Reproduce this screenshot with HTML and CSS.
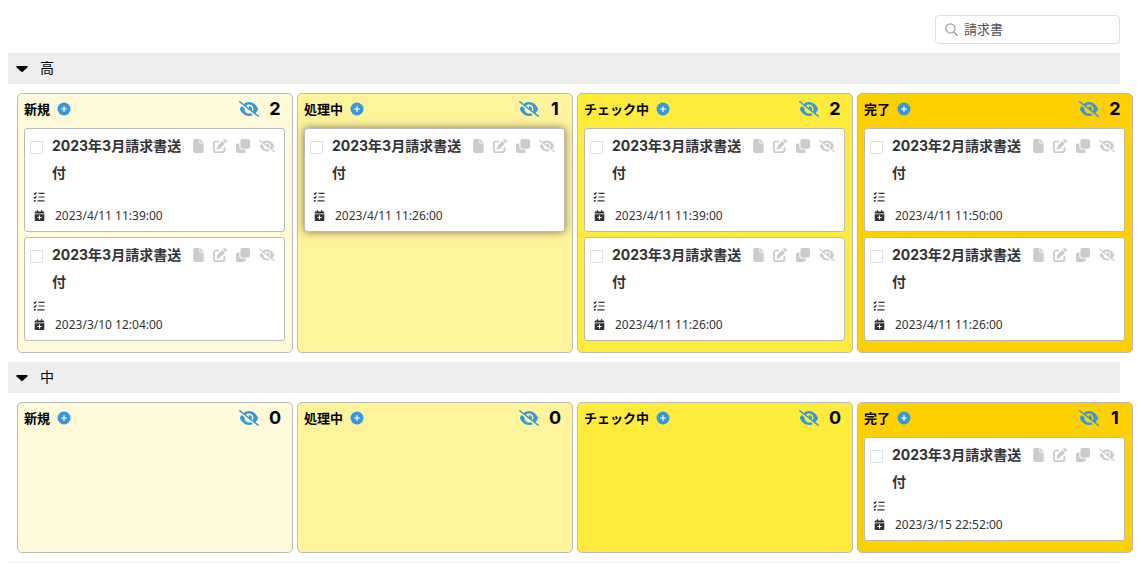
FILE: index.html
```html
<!DOCTYPE html>
<html lang="ja">
<head>
    <meta charset="UTF-8">
    <meta name="viewport" content="width=device-width, initial-scale=1.0">
    <title>カンバン</title>
    <link rel="stylesheet" href="styles.css">
</head>
<body>

<!-- Icons -->
<svg class="sprite" aria-hidden="true">
    <symbol id="i-search" viewBox="0 0 24 24">
        <circle cx="10" cy="10" r="8.5" fill="none" stroke="currentColor" stroke-width="2.2"/>
        <path d="M16.5 16.5l6 6" fill="none" stroke="currentColor" stroke-width="2.4" stroke-linecap="round"/>
    </symbol>
    <symbol id="i-caret" viewBox="0 0 12 8">
        <path d="M1.2 1h9.6c.9 0 1.2.8.6 1.4L7 6.6c-.6.5-1.4.5-2 0L.6 2.4C0 1.8.3 1 1.2 1z"/>
    </symbol>
    <symbol id="i-plus" viewBox="0 0 14 14">
        <circle cx="7" cy="7" r="6.5"/>
        <path d="M7 4.5v5M4.5 7h5" stroke="#fff" stroke-width="1.2" stroke-linecap="round"/>
    </symbol>
    <symbol id="i-eye-slash" viewBox="0 0 640 512">
        <path d="M38.8 5.1C28.4-3.1 13.3-1.2 5.1 9.2S-1.2 34.7 9.2 42.9l592 464c10.4 8.2 25.5 6.3 33.7-4.1s6.3-25.5-4.1-33.7L525.6 386.7c39.6-40.6 66.4-86.1 79.9-118.4c3.3-7.9 3.3-16.7 0-24.6c-14.9-35.7-46.2-87.7-93-131.1C465.5 68.8 400.8 32 320 32c-68.2 0-125 26.3-169.3 60.8L38.8 5.1zM223.1 149.5C248.6 126.2 282.7 112 320 112c79.5 0 144 64.5 144 144c0 24.9-6.3 48.3-17.4 68.7L408 294.5c8.4-19.3 10.6-41.4 4.8-63.3c-11.1-41.5-47.8-69.4-88.6-71.1c-5.8-.2-9.2 6.1-7.4 11.7c2.1 6.4 3.3 13.2 3.3 20.3c0 10.2-2.4 19.8-6.6 28.3l-90.3-70.8zM373 389.9c-16.4 6.5-34.3 10.1-53 10.1c-79.5 0-144-64.5-144-144c0-6.9 .5-13.6 1.4-20.2L83.1 161.5C60.3 191.2 44 220.8 34.5 243.7c-3.3 7.9-3.3 16.7 0 24.6c14.9 35.7 46.2 87.7 93 131.1C174.5 443.2 239.2 480 320 480c47.8 0 89.9-12.9 126.2-32.5L373 389.9z"/>
    </symbol>
    <symbol id="i-file" viewBox="0 0 384 512">
        <path d="M0 64C0 28.7 28.7 0 64 0H224V128c0 17.7 14.3 32 32 32H384V448c0 35.3-28.7 64-64 64H64c-35.3 0-64-28.7-64-64V64zm384 64H256V0L384 128z"/>
    </symbol>
    <symbol id="i-edit" viewBox="0 0 512 512">
        <path d="M471.6 21.7c-21.9-21.9-57.3-21.9-79.2 0L362.3 51.7l97.9 97.9 30.1-30.1c21.9-21.9 21.9-57.3 0-79.2L471.6 21.7zm-299.2 220c-6.1 6.1-10.8 13.6-13.5 21.9l-29.6 88.8c-2.9 8.6-.6 18.1 5.8 24.6s15.9 8.7 24.6 5.8l88.8-29.6c8.2-2.7 15.7-7.4 21.9-13.5L437.7 172.3 339.7 74.3 172.4 241.7zM96 64C43 64 0 107 0 160V416c0 53 43 96 96 96H352c53 0 96-43 96-96V320c0-17.7-14.3-32-32-32s-32 14.3-32 32v96c0 17.7-14.3 32-32 32H96c-17.7 0-32-14.3-32-32V160c0-17.7 14.3-32 32-32h96c17.7 0 32-14.3 32-32s-14.3-32-32-32H96z"/>
    </symbol>
    <symbol id="i-clone" viewBox="0 0 512 512">
        <path d="M224 0h224c35 0 64 29 64 64v224c0 35-29 64-64 64H224c-35 0-64-29-64-64V64c0-35 29-64 64-64zM64 160h60v128c0 55 45 100 100 100h128v60c0 35-29 64-64 64H64c-35 0-64-29-64-64V224c0-35 29-64 64-64z"/>
    </symbol>
    <symbol id="i-list" viewBox="0 0 12 12">
        <path d="M.8 2.4l1 1L3.4 1.3M.8 6.2l1 1L3.4 5.1M5.5 2.4h6M5.5 6h6M4.5 9.8h7" fill="none" stroke="currentColor" stroke-width="1.2"/>
        <circle cx="1.8" cy="9.8" r="1"/>
    </symbol>
    <symbol id="i-calendar" viewBox="0 0 448 512">
        <path d="M96 32V64H48C21.5 64 0 85.5 0 112v48H448V112c0-26.5-21.5-48-48-48H352V32c0-17.7-14.3-32-32-32s-32 14.3-32 32V64H160V32c0-17.7-14.3-32-32-32S96 14.3 96 32zM448 192H0V464c0 26.5 21.5 48 48 48H400c26.5 0 48-21.5 48-48V192zM224 248c13.3 0 24 10.7 24 24v56h56c13.3 0 24 10.7 24 24s-10.7 24-24 24H248v56c0 13.3-10.7 24-24 24s-24-10.7-24-24V376H144c-13.3 0-24-10.7-24-24s10.7-24 24-24h56V272c0-13.3 10.7-24 24-24z"/>
    </symbol>
</svg>

<header class="toolbar">
    <label class="search">
        <svg><use href="#i-search"/></svg>
        <input type="text" value="請求書" aria-label="検索">
    </label>
</header>

<main id="board"></main>

<script src="board.js"></script>
</body>
</html>
```
FILE: styles.css
```css
/* Global Styles */
* {
    box-sizing: border-box;
}

body {
    font-family: Inter, "Noto Sans CJK JP", sans-serif;
    font-size: 12px;
    background-color: #fff;
    color: #333;
    margin: 0;
}

svg {
    display: block;
    fill: currentColor;
}

.sprite {
    display: none;
}

button {
    border: none;
    padding: 0;
    background: none;
    color: inherit;
    font: inherit;
    cursor: pointer;
}

/* Toolbar */
.toolbar {
    display: flex;
    justify-content: flex-end;
    padding: 15px 17px 9px 8px;
}

.search {
    display: flex;
    align-items: center;
    gap: 6px;
    width: 185px;
    height: 29px;
    padding: 0 9px;
    border: 1px solid #dcdfe6;
    border-radius: 4px;
    color: #999;
}

.search svg {
    flex: none;
    width: 13px;
    height: 13px;
}

.search input {
    flex: 1;
    min-width: 0;
    height: 25px;
    border: none;
    outline: none;
    padding: 0 0 2px;
    background: none;
    color: #555;
    font: inherit;
    font-size: 13px;
}

/* Priority groups */
.group-header {
    display: flex;
    align-items: center;
    gap: 12px;
    width: calc(100% - 25px);
    height: 31px;
    margin-left: 8px;
    padding: 0 8px 2px;
    background-color: #eee;
    color: #000;
    font-size: 14px;
    line-height: 29px;
    text-align: left;
}

.group-header svg {
    width: 12px;
    height: 8px;
    margin-top: 2px;
}

.columns {
    display: grid;
    grid-template-columns: repeat(4, minmax(0, 1fr));
    gap: 4px;
    margin: 9px 4px 9px 17px;
}

.board-end {
    height: 1px;
    margin: 0 17px 0 8px;
    background-color: #eee;
}

/* Columns */
.column {
    min-height: 150px;
    padding: 0 7px 11px 6px;
    border: 1px solid #bbb;
    border-radius: 5px;
}

.new {
    background-color: #fffad9;
}

.progress {
    background-color: #fff49c;
}

.check {
    background-color: #ffeb3b;
}

.done {
    background-color: #ffd000;
}

.column-header {
    display: flex;
    align-items: center;
    height: 30px;
    margin-bottom: 4px;
    color: #000;
    font-weight: bold;
}

.column-header h2 {
    margin: 0 7px 0 0;
    font-size: 13px;
    line-height: 30px;
}

.column-header button {
    color: #3498db;
}

.add svg {
    width: 14px;
    height: 14px;
}

.hide {
    margin-left: auto;
}

.hide svg {
    width: 20px;
    height: 16px;
}

.count {
    width: 12px;
    margin: 0 4px 0 10px;
    font-size: 18px;
    line-height: 30px;
    text-align: center;
}

/* Cards */
.card {
    padding: 3px 5px 6px;
    border: 1px solid #bbb;
    border-radius: 3px;
    background-color: #fff;
}

.card + .card {
    margin-top: 5px;
}

.card.active {
    box-shadow: 0 0 8px rgba(0, 0, 0, 0.5);
}

.card-top {
    display: flex;
    align-items: flex-start;
    margin-bottom: 1px;
}

.card-top input {
    appearance: none;
    flex: none;
    width: 13px;
    height: 13px;
    margin: 9px 9px 0 0;
    border: 1px solid #dcdfe6;
    border-radius: 1px;
    background-color: #fff;
}

.card-top h3 {
    flex: 1;
    margin: 0;
    color: #333;
    font-size: 14px;
    line-height: 27px;
}

.actions {
    display: flex;
    align-items: center;
    gap: 9px;
    height: 27px;
    margin: 0 4px 0 9px;
    color: #ccc;
}

.actions svg {
    width: 14px;
    height: 14px;
}

.actions .i-file {
    width: 11px;
}

.actions .i-eye-slash {
    width: 16px;
}

.card-row {
    display: flex;
    align-items: center;
    gap: 9px;
    height: 19px;
    padding-left: 3px;
    font-family: "Noto Sans", sans-serif;
    line-height: 19px;
}

.card-row svg {
    width: 12px;
    height: 12px;
}

.card-row .i-calendar {
    width: 13px;
    height: 11px;
}
```
FILE: board.js
```js
const columns = [
    { name: '新規', style: 'new' },
    { name: '処理中', style: 'progress' },
    { name: 'チェック中', style: 'check' },
    { name: '完了', style: 'done' }
];

const march = '2023年3月請求書送付';
const february = '2023年2月請求書送付';

const groups = [
    {
        name: '高',
        cards: [
            [{ title: march, date: '2023/4/11 11:39:00' }, { title: march, date: '2023/3/10 12:04:00' }],
            [{ title: march, date: '2023/4/11 11:26:00', active: true }],
            [{ title: march, date: '2023/4/11 11:39:00' }, { title: march, date: '2023/4/11 11:26:00' }],
            [{ title: february, date: '2023/4/11 11:50:00' }, { title: february, date: '2023/4/11 11:26:00' }]
        ]
    },
    {
        name: '中',
        cards: [[], [], [], [{ title: march, date: '2023/3/15 22:52:00' }]]
    }
];

function icon(name) {
    return `<svg class="i-${name}" aria-hidden="true"><use href="#i-${name}"/></svg>`;
}

function renderCard(card) {
    return `
        <article class="card ${card.active ? 'active' : ''}">
            <div class="card-top">
                <input type="checkbox" aria-label="${card.title}">
                <h3>${card.title}</h3>
                <div class="actions">
                    <button type="button" aria-label="詳細">${icon('file')}</button>
                    <button type="button" aria-label="編集">${icon('edit')}</button>
                    <button type="button" aria-label="複製">${icon('clone')}</button>
                    <button type="button" aria-label="非表示">${icon('eye-slash')}</button>
                </div>
            </div>
            <div class="card-row">${icon('list')}</div>
            <div class="card-row">${icon('calendar')}<time>${card.date}</time></div>
        </article>
    `;
}

function renderColumn(column, cards) {
    return `
        <section class="column ${column.style}">
            <div class="column-header">
                <h2>${column.name}</h2>
                <button type="button" class="add" aria-label="追加">${icon('plus')}</button>
                <button type="button" class="hide" aria-label="非表示">${icon('eye-slash')}</button>
                <span class="count">${cards.length}</span>
            </div>
            ${cards.map(renderCard).join('')}
        </section>
    `;
}

function toggleGroup(button) {
    const body = button.nextElementSibling;
    body.hidden = !body.hidden;
}

document.getElementById('board').innerHTML = groups.map(group => `
    <button type="button" class="group-header" onclick="toggleGroup(this)">${icon('caret')}${group.name}</button>
    <div class="group-body">
        <div class="columns">${columns.map((column, i) => renderColumn(column, group.cards[i])).join('')}</div>
    </div>
`).join('') + '<div class="board-end"></div>';
```
